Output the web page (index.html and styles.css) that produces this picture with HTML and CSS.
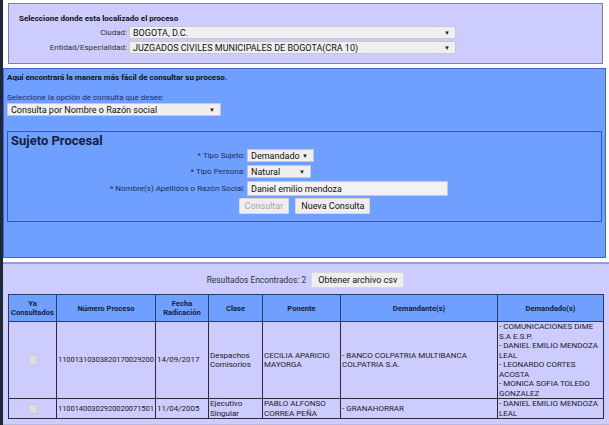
FILE: index.html
```html
<!DOCTYPE html>
<html lang="es">
  <head>
    <meta charset="UTF-8" />
    <meta name="viewport" content="width=device-width, initial-scale=1.0" />
    <title>Consulta de Procesos</title>
    <link rel="stylesheet" href="styles.css">
  </head>
  <body>
    <div class="page">
      <!-- Ubicación del proceso -->
      <div class="ubicacion">
        <p class="titulo">Seleccione donde esta localizado el proceso</p>
        <div class="fila">
          <label>Ciudad:</label>
          <span class="combo combo-largo">BOGOTA, D.C.</span>
        </div>
        <div class="fila">
          <label>Entidad/Especialidad:</label>
          <span class="combo combo-largo">JUZGADOS CIVILES MUNICIPALES DE BOGOTA(CRA 10)</span>
        </div>
      </div>

      <!-- Tipo de consulta -->
      <div class="consulta">
        <p class="titulo">Aquí encontrará la manera más fácil de consultar su proceso.</p>
        <p class="opcion">Seleccione la opción de consulta que desee:</p>
        <span class="combo combo-opcion">Consulta por Nombre o Razón social</span>

        <div class="sujeto">
          <h2>Sujeto Procesal</h2>
          <div class="campos">
            <label>* Tipo Sujeto:</label>
            <span class="combo combo-sujeto">Demandado</span>
            <label>* Tipo Persona:</label>
            <span class="combo combo-persona">Natural</span>
            <label>* Nombre(s) Apellidos o Razón Social:</label>
            <input class="texto" type="text" value="Daniel emilio mendoza" />
          </div>
          <div class="acciones">
            <button class="boton" disabled>Consultar</button>
            <button class="boton">Nueva Consulta</button>
          </div>
        </div>
      </div>

      <!-- Resultados -->
      <div class="resultados">
        <div class="resumen">
          <span>Resultados Encontrados: 2</span>
          <button class="boton">Obtener archivo csv</button>
        </div>
        <table class="tabla">
          <colgroup>
            <col style="width: 48px" />
            <col style="width: 99px" />
            <col style="width: 53px" />
            <col style="width: 54px" />
            <col style="width: 78px" />
            <col style="width: 157px" />
            <col style="width: 106px" />
          </colgroup>
          <thead>
            <tr>
              <th>Ya Consultados</th>
              <th>Número Proceso</th>
              <th>Fecha Radicación</th>
              <th>Clase</th>
              <th>Ponente</th>
              <th>Demandante(s)</th>
              <th>Demandado(s)</th>
            </tr>
          </thead>
          <tbody>
            <tr>
              <td class="check"><span class="caja"></span></td>
              <td class="numero">11001310303820170029200</td>
              <td>14/09/2017</td>
              <td>Despachos Comisorios</td>
              <td>CECILIA APARICIO MAYORGA</td>
              <td>- BANCO COLPATRIA MULTIBANCA COLPATRIA S.A.</td>
              <td>- COMUNICACIONES DIME S.A E.S.P.<br />- DANIEL EMILIO MENDOZA LEAL<br />- LEONARDO CORTES ACOSTA<br />- MONICA SOFIA TOLEDO GONZALEZ</td>
            </tr>
            <tr>
              <td class="check"><span class="caja"></span></td>
              <td class="numero">11001400302920020071501</td>
              <td>11/04/2005</td>
              <td>Ejecutivo Singular</td>
              <td>PABLO ALFONSO CORREA PEÑA</td>
              <td>- GRANAHORRAR</td>
              <td>- DANIEL EMILIO MENDOZA LEAL</td>
            </tr>
          </tbody>
        </table>
      </div>
    </div>
  </body>
</html>
```

FILE: styles.css
```css
body {
  margin: 0;
  background: #ffffff;
  font-family: Roboto, "Liberation Sans", Arial, sans-serif;
  font-size: 8px;
  color: #222;
}

.page {
  border-left: 3px solid #1d2938;
  min-height: 425px;
  padding-top: 3px;
  box-sizing: border-box;
}

p {
  margin: 0;
}

.titulo {
  font-weight: bold;
  color: #111;
}

/* selects dibujados a mano */
.combo {
  display: inline-block;
  position: relative;
  box-sizing: border-box;
  height: 13px;
  line-height: 12px;
  padding: 0 12px 0 3px;
  background: #efefef;
  border: 1px solid #c8c8d0;
  font-size: 9px;
  color: #111;
  white-space: nowrap;
  overflow: hidden;
}

.combo::after {
  content: "\25BC";
  position: absolute;
  right: 5px;
  top: 0;
  font-size: 6px;
  color: #222;
}

.ubicacion {
  margin: 0 6px 0 5px;
  padding: 10px 10px 9px;
  background: #ccccff;
  border: 1px solid #7f7f9a;
}

.ubicacion .titulo {
  margin-bottom: 3px;
}

.ubicacion .fila {
  display: flex;
  align-items: center;
  margin-top: 2px;
}

.ubicacion label {
  width: 108px;
  text-align: right;
  padding-right: 2px;
  color: #333;
}

.combo-largo {
  width: 327px;
}

.consulta {
  margin-top: 4px;
  margin-right: 3px;
  height: 190px;
  box-sizing: border-box;
  padding: 4px 3px 0 3px;
  background: #6fa0ff;
  border: 1px solid #3f66c8;
}

.consulta .opcion {
  margin-top: 11px;
  color: #1e2d57;
}

.combo-opcion {
  width: 214px;
  margin-top: 1px;
}

.sujeto {
  margin-top: 13px;
  height: 91px;
  box-sizing: border-box;
  border: 1px solid #3556b8;
  padding: 1px 0 0;
}

.sujeto h2 {
  margin: 0 0 0 3px;
  font-size: 13px;
  line-height: 15px;
  color: #14213d;
}

.campos {
  display: grid;
  grid-template-columns: 239px auto;
  justify-content: start;
  align-items: center;
  row-gap: 3px;
  margin-top: 1px;
}

.campos label {
  text-align: right;
  padding-right: 2px;
  color: #1e2d57;
}

.combo-sujeto {
  width: 67px;
}

.combo-persona {
  width: 64px;
}

.texto {
  width: 201px;
  height: 15px;
  box-sizing: border-box;
  margin: 0;
  padding: 0 3px;
  border: 1px solid #c8c8d0;
  background: #f2f2f2;
  font-family: inherit;
  font-size: 9px;
  color: #111;
}

.acciones {
  display: flex;
  justify-content: center;
  gap: 6px;
  margin-top: 2px;
}

.boton {
  height: 16px;
  padding: 0 5px;
  border: 1px solid #d8d8d8;
  border-radius: 1px;
  background: #eeeeee;
  font-family: inherit;
  font-size: 9px;
  color: #111;
}

.boton:disabled {
  color: #a8a8a8;
}

.resultados {
  margin-top: 4px;
  padding: 8px 6px 5px 5px;
  background: #ccccff;
  border-top: 2px solid #9c9ccc;
  border-bottom: 1px solid #b8b8d8;
}

.resumen {
  display: flex;
  justify-content: center;
  align-items: center;
  gap: 5px;
  font-size: 8.4px;
  color: #333;
}

.resumen .boton {
  padding: 0 6px;
}

.tabla {
  margin-top: 6px;
  width: 595px;
  table-layout: fixed;
  border-collapse: collapse;
  border: 1px solid #2b2b3b;
}

.tabla th {
  background: #6fa0ff;
  border: 1px solid #2b3b6b;
  padding: 1px 1px;
  font-weight: bold;
  font-size: 7.6px;
  color: #14213d;
  line-height: 9px;
  height: 24px;
}

.tabla td {
  border: 1px solid #2b2b3b;
  padding: 0 1px;
  line-height: 9.5px;
  color: #222;
  vertical-align: middle;
  word-wrap: break-word;
}

.tabla td.numero {
  white-space: nowrap;
  font-size: 7.6px;
  letter-spacing: -0.1px;
}

.tabla td.check {
  text-align: center;
}

.caja {
  display: inline-block;
  width: 8px;
  height: 8px;
  background: #dcdce6;
  border: 1px solid #c8c8d4;
  vertical-align: middle;
}
```
